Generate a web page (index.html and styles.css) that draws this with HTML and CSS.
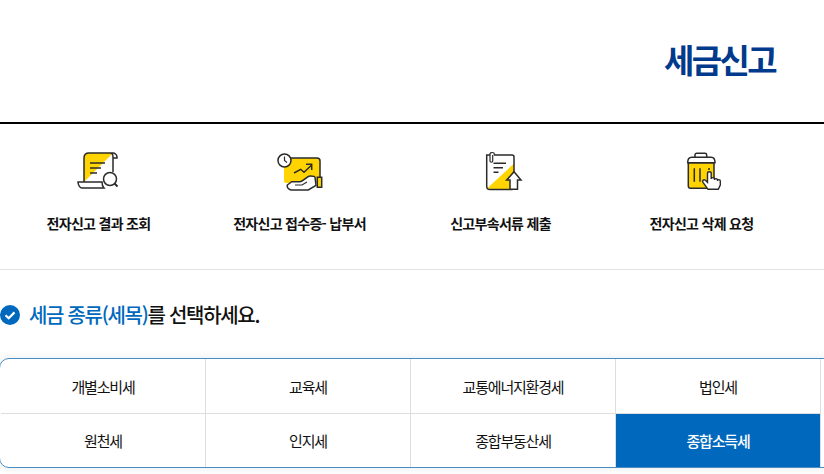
FILE: index.html
```html
<!DOCTYPE html>
<html lang="ko">
<head>
    <meta charset="UTF-8">
    <meta name="viewport" content="width=device-width, initial-scale=1.0">
    <title>세금신고</title>
    <link rel="stylesheet" href="styles.css">
</head>
<body>
    <div class="page">
        <header class="top">
            <h1>세금신고</h1>
        </header>

        <div class="menu-wrap">
            <ul class="menu">
                <li>
                    <svg class="ico" width="46" height="46" viewBox="0 0 46 46">
                        <path d="M8 32V8c0-3 2-5 5-5h24c2 0 4 2 4 4h-4" fill="#fff"/>
                        <path d="M8 32V8c0-3 2-5 5-5h24z" fill="#ffd400"/>
                        <path d="M8 32V8c0-3 2-5 5-5h24c2 0 4 2 4 4v1h-4V7c0-2-1-4-3-4M37 7v15" fill="none" stroke="#2b2b2b" stroke-width="1.500"/>
                        <path d="M14 13h15M14 18h11M14 23h7" stroke="#2b2b2b" stroke-width="1.500"/>
                        <path d="M2 32h24c0 3 1 5 2 6H6c-2 0-4-3-4-6z" fill="#fff" stroke="#2b2b2b" stroke-width="1.500"/>
                        <circle cx="34" cy="29" r="6.500" fill="#fff" stroke="#2b2b2b" stroke-width="1.500"/>
                        <path d="M38.500 33.500l3 3" stroke="#2b2b2b" stroke-width="2"/>
                    </svg>
                    <span>전자신고 결과 조회</span>
                </li>
                <li>
                    <svg class="ico" width="46" height="46" viewBox="0 0 46 46">
                        <path d="M7 14v17c0 1 1 2 2 2h34V11c0-2-1-3-3-3H12z" fill="#ffd400"/>
                        <path d="M12 8h28c2 0 3 1 3 3v16" fill="none" stroke="#2b2b2b" stroke-width="1.500"/>
                        <circle cx="7.500" cy="10.500" r="6.500" fill="#fff" stroke="#2b2b2b" stroke-width="1.500"/>
                        <path d="M7.500 6.500v4l2.500 2" fill="none" stroke="#2b2b2b" stroke-width="1.200"/>
                        <path d="M17 23l6.700-3.700 3.300 3 7.700-7.300M29 14.300h5.700V20" fill="none" stroke="#2b2b2b" stroke-width="1.500"/>
                        <path d="M10.300 35l4.400-3.300H23c3 0 7-5.700 10-5.700 3 0 5 .5 5 1.300l1 8-7.700 4.700H14.700c-2 0-4.400-2-4.400-3.300z" fill="#fff" stroke="#2b2b2b" stroke-width="1.500"/>
                        <path d="M18 35h7l5-3" fill="none" stroke="#2b2b2b" stroke-width="1.200"/>
                        <path d="M40.300 27.300h4.400v10h-4.400z" fill="#ffd400" stroke="#2b2b2b" stroke-width="1.500"/>
                    </svg>
                    <span>전자신고 접수증- 납부서</span>
                </li>
                <li>
                    <svg class="ico" width="46" height="46" viewBox="0 0 46 46">
                        <path d="M9 38.500l27-25V39H12z" fill="#ffd400"/>
                        <path d="M16 5h18c1 0 2 1 2 2v15M36 37v1c0 1-1 1.500-2 1.500H12c-2 0-3.300-1.300-3.300-3.300V5H12" fill="none" stroke="#2b2b2b" stroke-width="1.500"/>
                        <path d="M16.300 5V4c0-2-4.300-2-4.300 0v7c0 1.500 2.700 1.500 2.700 0V5" fill="none" stroke="#2b2b2b" stroke-width="1.200"/>
                        <path d="M15.500 13.300H28M15.500 17.700H25M15.500 22.300h5" stroke="#2b2b2b" stroke-width="1.500"/>
                        <path d="M36 21.700l7 8.300h-3.500v9.300H32V30h-3.300z" fill="#fff" stroke="#2b2b2b" stroke-width="1.500"/>
                    </svg>
                    <span>신고부속서류 제출</span>
                </li>
                <li>
                    <svg class="ico" width="46" height="46" viewBox="0 0 46 46">
                        <path d="M9.300 12.700H35V36c0 1.500-1 2.300-2.500 2.300h-21c-1.500 0-2.200-.8-2.200-2.300z" fill="#ffd400" stroke="#2b2b2b" stroke-width="1.500"/>
                        <path d="M8.700 12.700c0-3.500 1.500-5.400 4-5.400h19.600c2.500 0 3.700 1.900 3.700 5.400z" fill="#fff" stroke="#2b2b2b" stroke-width="1.500"/>
                        <path d="M16 7.300V5c0-1 .7-1.700 1.700-1.700H26c1 0 1.700.7 1.700 1.700v2.300" fill="none" stroke="#2b2b2b" stroke-width="1.500"/>
                        <path d="M15.300 18.300v13.400M21 18.300v13.400M30 18v2" stroke="#2b2b2b" stroke-width="1.500"/>
                        <path d="M29 39.300l-5-7c-1.200-2 1-3.300 2.300-2l2.200 2V23.500c0-2.300 3.700-2.300 3.700 0v5.500c0-1.800 3.300-1.800 3.300 0v1c0-1.800 3-1.800 3 0v1c0-1.800 2.800-1.800 2.800 0v4l-2 4.300z" fill="#fff" stroke="#2b2b2b" stroke-width="1.400"/>
                    </svg>
                    <span>전자신고 삭제 요청</span>
                </li>
            </ul>
        </div>

        <h2 class="pick">
            <svg width="20" height="20" viewBox="0 0 20 20">
                <circle cx="10" cy="10" r="10" fill="#0068bd"/>
                <path d="M5.500 10.200l3.200 3 5.800-5.800" fill="none" stroke="#fff" stroke-width="2.200"/>
            </svg>
            <span><em>세금 종류(세목)</em>를 선택하세요.</span>
        </h2>

        <div class="tax-wrap">
            <div class="tax-grid">
                <a>개별소비세</a>
                <a>교육세</a>
                <a>교통에너지환경세</a>
                <a>법인세</a>
                <a>원천세</a>
                <a>인지세</a>
                <a>종합부동산세</a>
                <a class="on">종합소득세</a>
            </div>
        </div>
    </div>
</body>
</html>
```

FILE: styles.css
```css
html, body {
    margin: 0;
    padding: 0;
    height: 474px;
    overflow: hidden;
    background: #fff;
}
body {
    font-family: "Noto Sans CJK KR", "Noto Sans", sans-serif;
    color: #111;
}
.page {
    width: 824px;
    overflow: hidden;
    height: 474px;
}
.top {
    height: 122px;
    border-bottom: 2px solid #000;
    display: flex;
    justify-content: flex-end;
}
.top h1 {
    margin: 0;
    padding: 35px 49px 0 0;
    font-size: 33px;
    line-height: 48px;
    font-weight: 700;
    letter-spacing: -2.600px;
    color: #003a8c;
}
.menu-wrap {
    height: 145px;
    border-bottom: 1px solid #e2e2e2;
}
.menu {
    list-style: none;
    margin: 0 0 0 -2px;
    padding: 0;
    width: 804px;
    display: grid;
    grid-template-columns: repeat(4, 1fr);
}
.menu li {
    display: flex;
    flex-direction: column;
    align-items: center;
    padding-top: 26px;
}
.menu .ico {
    display: block;
}
.menu span {
    margin-top: 17px;
    font-size: 14px;
    line-height: 20px;
    font-weight: 700;
    letter-spacing: -0.700px;
    white-space: nowrap;
}
.pick {
    margin: 0;
    padding-top: 31px;
    display: flex;
    align-items: center;
    gap: 9px;
    font-size: 20px;
    line-height: 28px;
    font-weight: 500;
    letter-spacing: -1.300px;
    color: #111;
}
.pick em {
    font-style: normal;
    color: #0068bd;
}
.tax-wrap {
    margin: 29px 0 0 -1px;
    padding-left: 1px;
    width: 900px;
    height: 108px;
    border: 1px solid #4a8dc2;
    border-radius: 10px;
    box-shadow: 0 0 10px rgba(0, 40, 80, .1);
    background: #fff;
    overflow: hidden;
}
.tax-grid {
    display: grid;
    grid-template-columns: repeat(4, 205px);
    grid-template-rows: 55px 53px;
}
.tax-grid a {
    display: flex;
    align-items: center;
    justify-content: center;
    font-size: 15px;
    letter-spacing: -1.200px;
    color: #111;
    border-right: 1px solid #ddd;
    border-bottom: 1px solid #ddd;
}
.tax-grid a:nth-child(n+5) {
    border-bottom: 0;
}
.tax-grid a.on {
    background: #0068bd;
    color: #fff;
    font-weight: 500;
}
```
